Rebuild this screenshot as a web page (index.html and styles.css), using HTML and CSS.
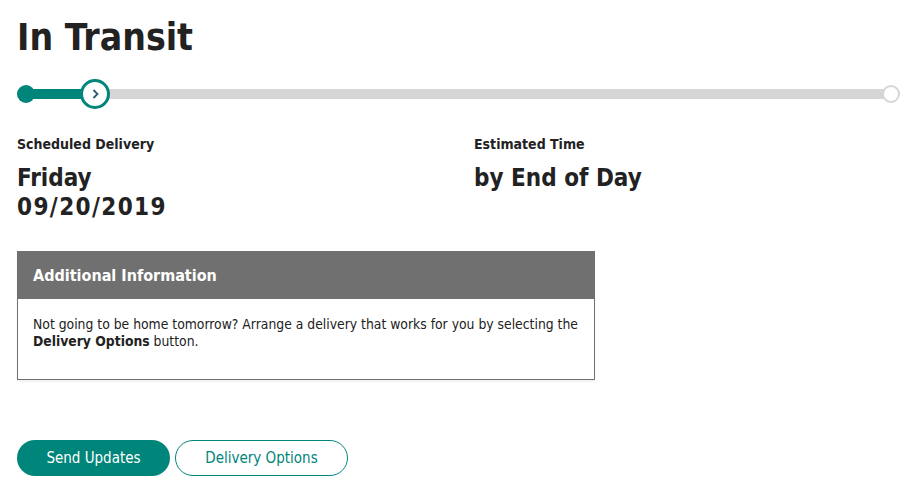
FILE: index.html
```html
<!DOCTYPE html>
<html lang="en">
<head>
  <meta charset="UTF-8">
  <title>In Transit</title>
  <link rel="stylesheet" href="styles.css">
</head>
<body>
  <div class="tracker">
    <h1>In Transit</h1>

    <div class="progress">
      <div class="track"></div>
      <div class="fill"></div>
      <span class="dot start"></span>
      <span class="dot current">
        <svg width="12" height="12" viewBox="0 0 12 12"><path d="M4.5 2 L8.5 6 L4.5 10" fill="none" stroke="#2a5c6e" stroke-width="1.8"/></svg>
      </span>
      <span class="dot end"></span>
    </div>

    <div class="details">
      <div class="detail">
        <div class="label">Scheduled Delivery</div>
        <div class="value">Friday<br><span class="date">09/20/2019</span></div>
      </div>
      <div class="detail">
        <div class="label">Estimated Time</div>
        <div class="value">by End of Day</div>
      </div>
    </div>

    <div class="info">
      <div class="info-head">Additional Information</div>
      <div class="info-body">
        Not going to be home tomorrow? Arrange a delivery that works for you by selecting the
        <b>Delivery Options</b> button.
      </div>
    </div>

    <div class="actions">
      <button class="btn primary">Send Updates</button>
      <button class="btn outline">Delivery Options</button>
    </div>
  </div>
</body>
</html>
```

FILE: styles.css
```css
body { margin: 0; background: #fff; color: #222; font-family: "DejaVu Sans Condensed", "DejaVu Sans", sans-serif; }
.tracker { padding: 17px 15px 0 17px; }
h1 { margin: 0; font-size: 37px; line-height: 42px; font-weight: bold; color: #222; }

.progress { position: relative; height: 34px; margin-top: 18px; }
.track { position: absolute; left: 8px; right: 8px; top: 12px; height: 10px; background: #d6d6d6; }
.fill { position: absolute; left: 8px; width: 80px; top: 12px; height: 10px; background: #00857a; }
.dot { position: absolute; box-sizing: border-box; border-radius: 50%; }
.dot.start { left: 0; top: 8px; width: 18px; height: 18px; background: #00857a; }
.dot.current { left: 63px; top: 2px; width: 30px; height: 30px; background: #fff; border: 3px solid #00857a; display: flex; align-items: center; justify-content: center; }
.dot.end { right: 0; top: 8px; width: 18px; height: 18px; background: #fff; border: 2px solid #d6d6d6; }

.details { display: flex; margin-top: 24px; }
.detail { flex: none; width: 457px; }
.detail + .detail { width: auto; }
.label { font-size: 14px; font-weight: bold; line-height: 18px; }
.value { margin-top: 11px; font-size: 24px; font-weight: bold; line-height: 29px; }
.date { letter-spacing: 1.4px; }

.info { width: 578px; margin-top: 29px; box-sizing: border-box; border: 1px solid #707070; box-shadow: 0 2px 2px rgba(0,0,0,0.06); }
.info-head { background: #707070; color: #fff; font-weight: bold; font-size: 16px; height: 47px; line-height: 47px; padding-left: 15px; }
.info-body { padding: 17px 4px 29px 15px; font-size: 13.8px; line-height: 17px; }

.actions { display: flex; gap: 5px; margin-top: 60px; }
.btn { height: 36px; border-radius: 18px; font-family: inherit; font-size: 15px; cursor: pointer; }
.btn.primary { width: 153px; background: #00857a; color: #fff; border: none; }
.btn.outline { width: 173px; background: #fff; color: #00857a; border: 1px solid #00857a; }
```
